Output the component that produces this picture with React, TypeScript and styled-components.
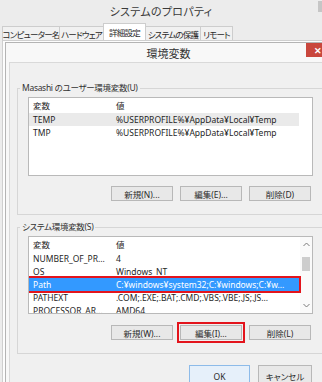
import React from 'react'
import styled, { createGlobalStyle } from 'styled-components'

const Global = createGlobalStyle`
    body {
        margin: 0;
        background: #ececec;
    }
`

const Screen = styled.div`
    width: 322px;
    height: 382px;
    overflow: hidden;
    display: flex;
    flex-direction: column;
    background: #ececec;
    color: #1f1f1f;
    font-family: "Noto Sans", "Noto Sans CJK JP", sans-serif;
    font-feature-settings: "palt";
    font-size: 8.5px;
`

const TitleBar = styled.div`
    position: relative;
    height: 22px;
    flex: none;
    display: flex;
    align-items: center;
    justify-content: center;
    font-size: 11px;
    letter-spacing: 0.3px;
    color: #3a3a3a;
`

const EdgeControl = styled.div`
    position: absolute;
    right: 0;
    top: 1px;
    width: 4px;
    height: 11px;
    background: #c6c6c6;
`

const TabStrip = styled.div`
    height: 18px;
    flex: none;
    display: flex;
    align-items: flex-end;
    padding-left: 2px;
`

const Tab = styled.div<{ $active?: boolean; $w: number }>`
    width: ${p => p.$w}px;
    height: ${p => (p.$active ? 17 : 14)}px;
    margin-right: -1px;
    display: flex;
    align-items: center;
    justify-content: center;
    border: 1px solid #cdcdcd;
    border-bottom: none;
    background: ${p => (p.$active ? '#ffffff' : '#f1f1f1')};
    box-sizing: border-box;
    font-size: 8.5px;
    letter-spacing: -0.8px;
    white-space: nowrap;
    color: #2a2a2a;
    position: relative;
    z-index: ${p => (p.$active ? 1 : 0)};
`

const Panel = styled.div`
    flex: 1;
    display: flex;
    margin-left: 2px;
    padding: 1px 0 0 2px;
    border-left: 1px solid #cfcfcf;
    border-top: 1px solid #cfcfcf;
    background: #fdfdfd;
    min-height: 0;
`

const Dialog = styled.div`
    position: relative;
    width: 330px;
    flex: none;
    display: flex;
    flex-direction: column;
    box-sizing: border-box;
    border: 1px solid #b4b4b4;
    border-right: none;
    border-bottom: none;
    padding: 0 3px;
    background: #f8f8f8;
`

const DialogTitle = styled.div`
    height: 19px;
    flex: none;
    display: flex;
    align-items: center;
    justify-content: center;
    padding-right: 4px;
    font-size: 11px;
    color: #333;
`

const CloseButton = styled.div`
    position: absolute;
    top: 0;
    left: 300px;
    width: 24px;
    height: 14px;
    display: flex;
    align-items: center;
    justify-content: center;
    background: #c9473d;
    color: #fff;
    font-size: 9px;
    font-weight: 700;
`

const Body = styled.div`
    flex: 1;
    display: flex;
    flex-direction: column;
    padding: 19px 0 0 7px;
    border: 1px solid #d9d9d9;
    border-right: none;
    background: #f0f0f0;
`

const Group = styled.fieldset<{ $gap?: number }>`
    margin: ${p => p.$gap ?? 0}px 0 0 0;
    padding: 0 0 13px 10px;
    width: 320px;
    box-sizing: border-box;
    border: 1px solid #d6d6d6;
    min-inline-size: 0;
`

const Legend = styled.legend`
    margin-left: -8px;
    padding: 0 2px;
    font-size: 8.5px;
    letter-spacing: -0.3px;
    line-height: 12px;
    color: #333;
`

const ListBox = styled.div<{ $h: number }>`
    margin-top: 3px;
    width: 285px;
    height: ${p => p.$h}px;
    box-sizing: border-box;
    display: flex;
    border: 1px solid #b9b9b9;
    background: #fff;
    overflow: hidden;
`

const Rows = styled.div`
    flex: 1;
    display: flex;
    flex-direction: column;
    min-width: 0;
`

const Row = styled.div<{ $kind?: 'header' | 'soft' | 'selected'; $marked?: boolean }>`
    width: 270px;
    height: ${p => (p.$kind === 'header' ? 15 : 13)}px;
    flex: none;
    display: grid;
    grid-template-columns: 83px 1fr;
    align-items: center;
    line-height: 13px;
    white-space: nowrap;
    background: ${p =>
        p.$kind === 'selected' ? '#3399ff' : p.$kind === 'soft' ? '#eaeaea' : 'transparent'};
    color: ${p => (p.$kind === 'selected' ? '#ffffff' : '#1f1f1f')};
    outline: ${p => (p.$marked ? '2px solid #e3141c' : 'none')};
    outline-offset: 0;
    position: relative;
    z-index: ${p => (p.$marked ? 1 : 0)};
`

const Cell = styled.span`
    padding-left: 4px;
    overflow: hidden;
`

const ScrollBar = styled.div`
    width: 12px;
    flex: none;
    display: flex;
    flex-direction: column;
    align-items: center;
    background: #fafafa;
`

const Arrow = styled.div`
    height: 15px;
    display: flex;
    align-items: center;
    justify-content: center;
`

const Track = styled.div`
    flex: 1;
    width: 100%;
    display: flex;
    justify-content: center;
    padding-top: 5px;
`

const Thumb = styled.div`
    width: 8px;
    height: 14px;
    background: #cdcdcd;
`

const ButtonRow = styled.div<{ $top: number; $outer?: boolean }>`
    margin-top: ${p => p.$top}px;
    margin-left: ${p => (p.$outer ? 10 : 0)}px;
    width: 285px;
    padding-right: ${p => (p.$outer ? 0 : 2)}px;
    box-sizing: border-box;
    display: flex;
    justify-content: flex-end;
    gap: ${p => (p.$outer ? 8 : 7)}px;
`

const Button = styled.div<{ $w?: number; $h?: number; $primary?: boolean; $marked?: boolean }>`
    width: ${p => p.$w ?? 62}px;
    height: ${p => p.$h ?? 15}px;
    flex: none;
    box-sizing: border-box;
    display: flex;
    align-items: center;
    justify-content: center;
    border: 1px solid ${p => (p.$primary ? '#8dbbe9' : '#b8b8b8')};
    background: ${p => (p.$primary ? '#e6f0fa' : '#e8e8e8')};
    color: #2a2a2a;
    font-size: 8.5px;
    white-space: nowrap;
    outline: ${p => (p.$marked ? '2px solid #e3141c' : 'none')};
    outline-offset: 1px;
`

const Chevron = ({ up }: { up?: boolean }) => (
    <svg width="7" height="5" viewBox="0 0 7 5">
        <polyline
            points={up ? '0.5,4 3.5,1 6.5,4' : '0.5,1 3.5,4 6.5,1'}
            fill="none"
            stroke="#7a7a7a"
            strokeWidth="1"
        />
    </svg>
)

const userVars = [
    { name: 'TEMP', value: '%USERPROFILE%¥AppData¥Local¥Temp' },
    { name: 'TMP', value: '%USERPROFILE%¥AppData¥Local¥Temp' },
]

const systemVars = [
    { name: 'NUMBER_OF_PR...', value: '4' },
    { name: 'OS', value: 'Windows_NT' },
    { name: 'Path', value: 'C:¥windows¥system32;C:¥windows;C:¥w...' },
    { name: 'PATHEXT', value: '.COM;.EXE;.BAT;.CMD;.VBS;.VBE;.JS;.JS...' },
    { name: 'PROCESSOR_AR...', value: 'AMD64' },
]

const tabs = [
    { label: 'コンピューター名', w: 58 },
    { label: 'ハードウェア', w: 45 },
    { label: '詳細設定', w: 43, active: true },
    { label: 'システムの保護', w: 56 },
    { label: 'リモート', w: 33 },
]

const App = () => {
    return (
        <Screen>
            <Global />
            <TitleBar>
                システムのプロパティ
                <EdgeControl />
            </TitleBar>
            <TabStrip>
                {tabs.map(t => (
                    <Tab key={t.label} $w={t.w} $active={t.active}>
                        {t.label}
                    </Tab>
                ))}
            </TabStrip>
            <Panel>
                <Dialog>
                    <DialogTitle>環境変数</DialogTitle>
                    <CloseButton>✕</CloseButton>
                    <Body>
                        <Group>
                            <Legend>Masashi のユーザー環境変数(U)</Legend>
                            <ListBox $h={79}>
                                <Rows>
                                    <Row $kind="header">
                                        <Cell>変数</Cell>
                                        <Cell>値</Cell>
                                    </Row>
                                    {userVars.map((v, i) => (
                                        <Row key={v.name} $kind={i === 0 ? 'soft' : undefined}>
                                            <Cell>{v.name}</Cell>
                                            <Cell>{v.value}</Cell>
                                        </Row>
                                    ))}
                                </Rows>
                            </ListBox>
                            <ButtonRow $top={10}>
                                <Button>新規(N)...</Button>
                                <Button>編集(E)...</Button>
                                <Button>削除(D)</Button>
                            </ButtonRow>
                        </Group>
                        <Group $gap={6}>
                            <Legend>システム環境変数(S)</Legend>
                            <ListBox $h={78}>
                                <Rows>
                                    <Row $kind="header">
                                        <Cell>変数</Cell>
                                        <Cell>値</Cell>
                                    </Row>
                                    {systemVars.map(v => (
                                        <Row
                                            key={v.name}
                                            $kind={v.name === 'Path' ? 'selected' : undefined}
                                            $marked={v.name === 'Path'}
                                        >
                                            <Cell>{v.name}</Cell>
                                            <Cell>{v.value}</Cell>
                                        </Row>
                                    ))}
                                </Rows>
                                <ScrollBar>
                                    <Arrow>
                                        <Chevron up />
                                    </Arrow>
                                    <Track>
                                        <Thumb />
                                    </Track>
                                    <Arrow>
                                        <Chevron />
                                    </Arrow>
                                </ScrollBar>
                            </ListBox>
                            <ButtonRow $top={11}>
                                <Button>新規(W)...</Button>
                                <Button $marked>編集(I)...</Button>
                                <Button>削除(L)</Button>
                            </ButtonRow>
                        </Group>
                        <ButtonRow $top={11} $outer>
                            <Button $w={61} $h={22} $primary>
                                OK
                            </Button>
                            <Button $w={54} $h={22}>
                                キャンセル
                            </Button>
                        </ButtonRow>
                    </Body>
                </Dialog>
            </Panel>
        </Screen>
    )
}

export default App
